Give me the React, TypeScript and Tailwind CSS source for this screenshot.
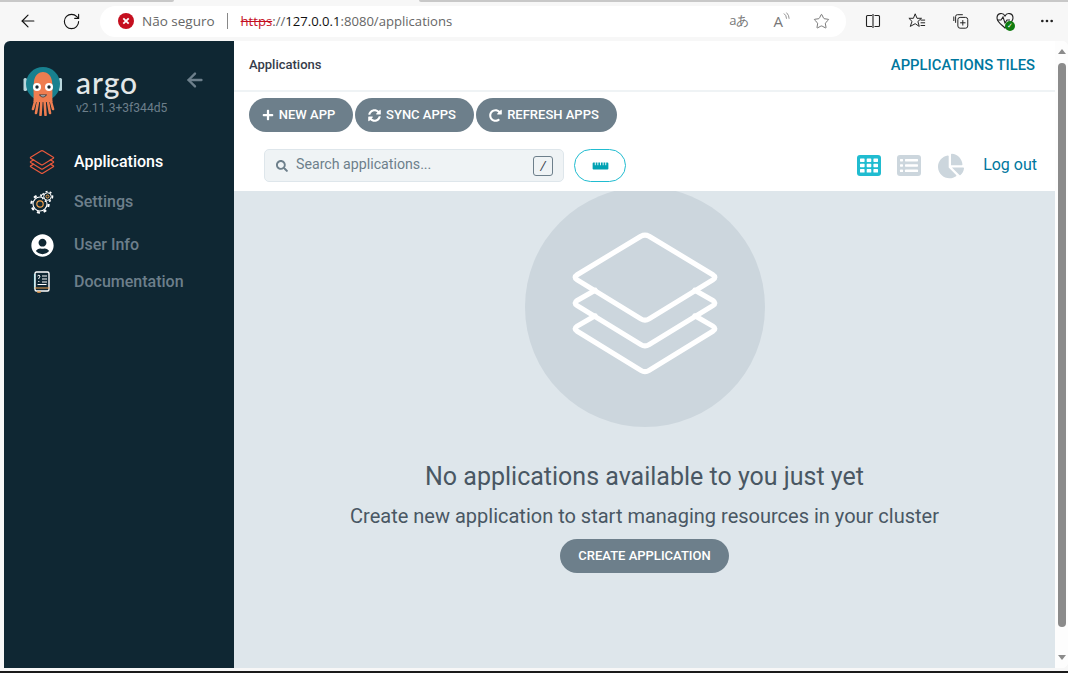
import { ArrowLeft, RotateCw, Star, MoreHorizontal } from "lucide-react";
import { FaPlus, FaSyncAlt, FaRedoAlt, FaSearch, FaChartPie, FaRulerHorizontal, FaUserCircle } from "react-icons/fa";

const layerPath = "M23.5 57.5 L6 67.5 Q2 70 6 72.5 L68 110.5 Q72 113 76 110.5 L138 72.5 Q142 70 138 67.5 L120.5 57.5";

const Layers = ({ className, stroke, width }: { className: string; stroke: string; width: number }) => (
  <svg viewBox="0 0 144 140" className={className} fill="none" stroke={stroke} strokeWidth={width} strokeLinejoin="round" strokeLinecap="round">
    <path d={layerPath} transform="translate(0 25)" />
    <path d={layerPath} />
    <path d="M68 5 Q72 3 76 5 L138 42.5 Q142 45 138 47.5 L76 85.5 Q72 88 68 85.5 L6 47.5 Q2 45 6 42.5 Z" />
  </svg>
);

const ArgoLogo = () => (
  <svg viewBox="0 0 44 52" className="h-[52px] w-[44px]">
    <rect x="0.5" y="14" width="3.5" height="13" rx="1.5" fill="#b9d6dc" />
    <rect x="35.5" y="14" width="3.5" height="13" rx="1.5" fill="#b9d6dc" />
    <circle cx="20" cy="20" r="17" fill="#18808f" />
    <path d="M10.5 38 C11 30 10 24 11 17 C12 11 16 8 20 8 C24 8 28 11 29 17 C30 24 29 30 29.5 38 Z" fill="#ee7d50" />
    <path d="M13 34 L10 45 M15.5 35 L13 49 M18.5 36 L17.5 51 M21.5 36 L22.5 51 M24.5 35 L27 49 M27 34 L30 45" stroke="#ee7d50" strokeWidth="2.6" strokeLinecap="round" />
    <circle cx="14" cy="23" r="4" fill="#fff" />
    <circle cx="26" cy="23" r="4" fill="#fff" />
    <circle cx="14" cy="23" r="1.7" fill="#1c2b33" />
    <circle cx="26" cy="23" r="1.7" fill="#1c2b33" />
    <path d="M16.5 31 Q20 35 23.5 31 Z" fill="#fff" stroke="#1c2b33" strokeWidth="0.9" />
  </svg>
);

const SettingsIcon = () => (
  <svg viewBox="0 0 24 24" className="h-[24px] w-[24px]" fill="none" stroke="#fff">
    <circle cx="10" cy="14" r="7" strokeWidth="1.1" />
    <circle cx="10" cy="14" r="8.6" strokeWidth="2.2" strokeDasharray="3 3.75" />
    <circle cx="10" cy="14" r="3.2" strokeWidth="1.2" stroke="#f0a04b" />
    <circle cx="17.5" cy="6.5" r="5.6" fill="#0f2733" stroke="none" />
    <circle cx="17.5" cy="6.5" r="3.8" strokeWidth="1" />
    <circle cx="17.5" cy="6.5" r="5" strokeWidth="1.6" strokeDasharray="2 2.2" />
    <circle cx="17.5" cy="6.5" r="1.5" strokeWidth="1" stroke="#f0a04b" />
  </svg>
);

const DocIcon = () => (
  <svg viewBox="0 0 18 22" className="h-[22px] w-[18px]" fill="none">
    <path d="M1.5 3 v15" stroke="#2fc3d6" strokeWidth="1.2" />
    <rect x="2" y="1" width="14" height="19" rx="1.5" stroke="#fff" strokeWidth="1.4" />
    <path d="M1.5 17 h15 M5 20 v2 h2 v-2" stroke="#f0a04b" strokeWidth="1.2" />
    <path d="M9 5 h5 M9 8 h5 M9 11 h5 M4.5 13.5 h9" stroke="#fff" strokeWidth="1.2" />
    <path d="M4.5 5 q1.5 -1.5 2.5 0 q0 1.2 -1.2 2 v1 M5.8 10 v1" stroke="#fff" strokeWidth="1" />
  </svg>
);

const GridIcon = () => (
  <svg viewBox="0 0 24 21" className="h-[21px] w-[24px]">
    <rect width="24" height="21" rx="3" fill="#20bcd0" />
    <g fill="#fff">
      <rect x="3" y="3.5" width="4.6" height="3.4" rx="0.6" />
      <rect x="9.7" y="3.5" width="4.6" height="3.4" rx="0.6" />
      <rect x="16.4" y="3.5" width="4.6" height="3.4" rx="0.6" />
      <rect x="3" y="8.8" width="4.6" height="3.4" rx="0.6" />
      <rect x="9.7" y="8.8" width="4.6" height="3.4" rx="0.6" />
      <rect x="16.4" y="8.8" width="4.6" height="3.4" rx="0.6" />
      <rect x="3" y="14.1" width="4.6" height="3.4" rx="0.6" />
      <rect x="9.7" y="14.1" width="4.6" height="3.4" rx="0.6" />
      <rect x="16.4" y="14.1" width="4.6" height="3.4" rx="0.6" />
    </g>
  </svg>
);

const ListIcon = () => (
  <svg viewBox="0 0 24 21" className="h-[21px] w-[24px]">
    <rect width="24" height="21" rx="3" fill="#ccd6dd" />
    <g fill="#fff">
      <rect x="3" y="4" width="3" height="2.4" rx="0.6" />
      <rect x="8" y="4" width="13" height="2.4" rx="0.6" />
      <rect x="3" y="9.3" width="3" height="2.4" rx="0.6" />
      <rect x="8" y="9.3" width="13" height="2.4" rx="0.6" />
      <rect x="3" y="14.6" width="3" height="2.4" rx="0.6" />
      <rect x="8" y="14.6" width="13" height="2.4" rx="0.6" />
    </g>
  </svg>
);

const Collections = () => (
  <svg viewBox="0 0 20 20" className="h-[18px] w-[18px]" fill="none" stroke="#222" strokeWidth="1.1">
    <path d="M4 12 V5 q0-2 2-2 h6" />
    <path d="M2 10 V5" />
    <rect x="6.5" y="6" width="11" height="12" rx="2.5" />
    <path d="M12 9 v6 M9 12 h6" />
  </svg>
);

const Health = () => (
  <span className="relative block h-[20px] w-[20px]">
    <svg viewBox="0 0 20 20" className="h-[20px] w-[20px]" fill="none" stroke="#222" strokeWidth="1.1">
      <path d="M10 5 C8 1 2 2 2 7 C2 11 7 14 10 17 C13 14 18 11 18 7 C18 2 12 1 10 5 Z" />
      <path d="M2 9 h4 l2 -3 l2 6 l2-3 h3" />
    </svg>
    <span className="absolute bottom-0 right-0 flex h-[10px] w-[10px] items-center justify-center rounded-full bg-[#107c10] text-[7px] leading-none text-white">✓</span>
  </span>
);

const Button = ({ icon, label, className }: { icon: React.ReactNode; label: string; className: string }) => (
  <button className={`flex h-[34px] items-center justify-center gap-[5px] rounded-[17px] bg-[#6d7f8b] pr-[5px] text-[13px] font-medium text-white ${className}`}>
    {icon}
    {label}
  </button>
);

export default function App() {
  return (
    <div className="flex h-[673px] w-[1068px] flex-col overflow-hidden bg-[#f7f7f7] font-['Roboto',sans-serif]">
      {/* browser toolbar */}
      <div className="relative h-[41px] shrink-0">
        <div className="absolute left-0 top-0 h-[2px] w-[174px] rounded-br bg-[#c8c8c8]" />
        <div className="absolute right-0 top-0 h-[2px] w-[649px] rounded-bl bg-[#c8c8c8]" />
        <div className="flex h-full items-center pt-[1px]">
          <div className="flex w-[100px] items-center pl-[18px]">
            <ArrowLeft className="h-[20px] w-[20px] text-[#111]" strokeWidth={1.4} />
            <RotateCw className="ml-[24px] h-[19px] w-[19px] text-[#111]" strokeWidth={1.4} />
          </div>
          <div className="flex h-[31px] w-[746px] items-center rounded-full bg-white pl-[18px] pr-[16px] font-['Open_Sans',sans-serif] text-[13.5px] text-[#666]">
            <svg viewBox="0 0 16 16" className="h-[16px] w-[16px]">
              <circle cx="8" cy="8" r="8" fill="#c50f1f" />
              <path d="M5.3 5.3 L10.7 10.7 M10.7 5.3 L5.3 10.7" stroke="#fff" strokeWidth="1.8" />
            </svg>
            <span className="ml-[8px]">Não seguro</span>
            <span className="ml-[12px] h-[16px] w-px bg-[#888]" />
            <span className="ml-[13px] pt-[2px] text-[13.1px]">
              <span className="text-[#c50f1f] line-through">https</span>
              ://
              <span className="text-[#111]">127.0.0.1</span>
              :8080/applications
            </span>
            <span className="ml-auto text-[13px] text-[#777]">aあ</span>
            <span className="ml-[24px] flex items-start text-[#777]">
              <span className="text-[15px] leading-[18px]">A</span>
              <svg viewBox="0 0 8 10" className="h-[10px] w-[7px]" fill="none" stroke="#777" strokeWidth="0.9">
                <path d="M1 1 Q4 3 4 7 M4 0 Q7 3 7 7" />
              </svg>
            </span>
            <Star className="ml-[23px] h-[17px] w-[17px] text-[#555]" strokeWidth={1.1} />
          </div>
          <div className="flex flex-1 items-center">
            <svg viewBox="0 0 16 16" className="ml-[19px] h-[16px] w-[16px]" fill="none" stroke="#222" strokeWidth="1.1">
              <path d="M7 2.5 H2.5 a1 1 0 0 0 -1 1 v9 a1 1 0 0 0 1 1 H7 M8 1 v14 M9.5 2.5 h4 a1 1 0 0 1 1 1 v9 a1 1 0 0 1 -1 1 h-4" />
            </svg>
            <svg viewBox="0 0 20 20" className="ml-[27px] h-[18px] w-[18px]" fill="none" stroke="#222" strokeWidth="1.1">
              <path d="M8 2 L10 7 H15 L11 10.5 L12.5 16 L8 13 L2.5 16 L4.5 10.5 L1 7 H6 Z" />
              <path d="M14 9 h5 M14 12 h5 M14 15 h5" />
            </svg>
            <span className="ml-[26px]"><Collections /></span>
            <span className="ml-[25px]"><Health /></span>
            <MoreHorizontal className="ml-[24px] h-[16px] w-[16px] text-[#222]" strokeWidth={2} />
          </div>
        </div>
      </div>

      {/* page */}
      <div className="ml-[4px] flex h-[627px] shrink-0 overflow-hidden rounded-tl-[6px] rounded-tr-[6px] rounded-br-[6px] bg-white">
        <aside className="flex w-[230px] shrink-0 flex-col bg-[#0f2733]">
          <div className="relative flex h-[100px] shrink-0 pl-[19px] pt-[23px]">
            <ArgoLogo />
            <div className="ml-[9px]">
              <div className="mt-[1px] font-['Lato',sans-serif] text-[30px] font-medium leading-[34px] tracking-[1px] text-[#e3e7e8]">argo</div>
              <div className="mt-[2px] text-[12.1px] leading-[14px] text-[#6d7f8b]">v2.11.3+3f344d5</div>
            </div>
            <ArrowLeft className="absolute left-[180px] top-[28px] h-[22px] w-[22px] text-[#6d7f8b]" strokeWidth={2.6} />
          </div>
          <nav className="flex flex-col text-[16px] font-medium text-[#6d7f8b]">
            <div className="mt-[9px] flex h-[24px] items-center">
              <span className="ml-[25px] flex w-[45px]"><Layers className="h-[24px] w-[26px]" stroke="#e9583c" width={7} /></span>
              <span className="text-white">Applications</span>
            </div>
            <div className="mt-[16px] flex h-[24px] items-center">
              <span className="ml-[26px] flex w-[44px]"><SettingsIcon /></span>
              <span>Settings</span>
            </div>
            <div className="mt-[19px] flex h-[24px] items-center">
              <span className="ml-[27px] flex w-[43px]"><FaUserCircle className="h-[23px] w-[23px] text-white" /></span>
              <span>User Info</span>
            </div>
            <div className="mt-[13px] flex h-[24px] items-center">
              <span className="ml-[29px] flex w-[41px]"><DocIcon /></span>
              <span>Documentation</span>
            </div>
          </nav>
        </aside>

        <main className="flex min-w-0 flex-1 flex-col">
          <header className="flex h-[51px] shrink-0 items-center justify-between border-b-2 border-[#eff3f5] pl-[15px] pr-[20px]">
            <span className="pb-[2px] text-[13px] font-medium text-[#363c4a]">Applications</span>
            <span className="text-[14.8px] font-medium text-[#00779e]">APPLICATIONS TILES</span>
          </header>
          <div className="flex h-[99px] shrink-0 flex-col pl-[15px]">
            <div className="mt-[6px] flex gap-[2px]">
              <Button className="w-[104px]" label="NEW APP" icon={<FaPlus className="h-[12px] w-[12px]" />} />
              <Button className="w-[119px]" label="SYNC APPS" icon={<FaSyncAlt className="h-[13px] w-[13px]" />} />
              <Button className="w-[141px]" label="REFRESH APPS" icon={<FaRedoAlt className="h-[13px] w-[13px]" />} />
            </div>
            <div className="mt-[17px] flex items-center pl-[15px] pr-[18px]">
              <div className="flex h-[33px] w-[300px] items-center rounded-[5px] border border-[#dee6eb] bg-[#eff3f5] pl-[11px] pr-[10px]">
                <FaSearch className="h-[12px] w-[12px] text-[#6d7f8b]" />
                <span className="ml-[8px] pb-[2px] text-[14.2px] text-[#6d7f8b]">Search applications...</span>
                <span className="ml-auto flex h-[20px] w-[20px] items-center justify-center rounded-[3px] border border-[#6d7f8b] text-[13px] italic text-[#363c4a]">/</span>
              </div>
              <div className="ml-[10px] flex h-[33px] w-[52px] items-center justify-center rounded-[17px] border border-[#20bcd0]">
                <FaRulerHorizontal className="h-[14px] w-[17px] text-[#00a2b3]" />
              </div>
              <span className="ml-auto"><GridIcon /></span>
              <span className="ml-[16px]"><ListIcon /></span>
              <FaChartPie className="ml-[17px] h-[26px] w-[26px] text-[#ccd6dd]" />
              <span className="ml-[19px] pb-[2px] text-[16px] text-[#00779e]">Log out</span>
            </div>
          </div>
          <section className="flex min-h-0 flex-1 flex-col items-center overflow-hidden bg-[#dee6eb]">
            <div className="-mt-[4px] flex h-[240px] w-[240px] shrink-0 items-center justify-center rounded-full bg-[#ccd6dd]">
              <Layers className="mb-[8px] h-[144px] w-[148px]" stroke="#fff" width={5} />
            </div>
            <h1 className="mt-[36px] text-[25px] font-normal leading-[28px] text-[#495763]">No applications available to you just yet</h1>
            <p className="mt-[13px] text-[20px] leading-[24px] text-[#495763]">Create new application to start managing resources in your cluster</p>
            <button className="mt-[11px] h-[34px] w-[169px] rounded-[17px] bg-[#6d7f8b] text-[13px] font-medium text-white">CREATE APPLICATION</button>
          </section>
        </main>

        {/* scrollbar */}
        <div className="flex w-[13px] shrink-0 flex-col items-center bg-[#fdfdfd] pt-[8px] pb-[8px]">
          <span className="h-0 w-0 border-x-[4px] border-b-[5px] border-x-transparent border-b-[#8b8b8b]" />
          <span className="mt-[9px] w-[8px] flex-1 rounded-full bg-[#8b8b8b]" />
          <span className="mt-[28px] h-0 w-0 border-x-[4px] border-t-[5px] border-x-transparent border-t-[#8b8b8b]" />
        </div>
      </div>
      <div className="h-[3px] shrink-0" />
      <div className="flex-1 bg-[#1a1a1a]" />
    </div>
  );
}
